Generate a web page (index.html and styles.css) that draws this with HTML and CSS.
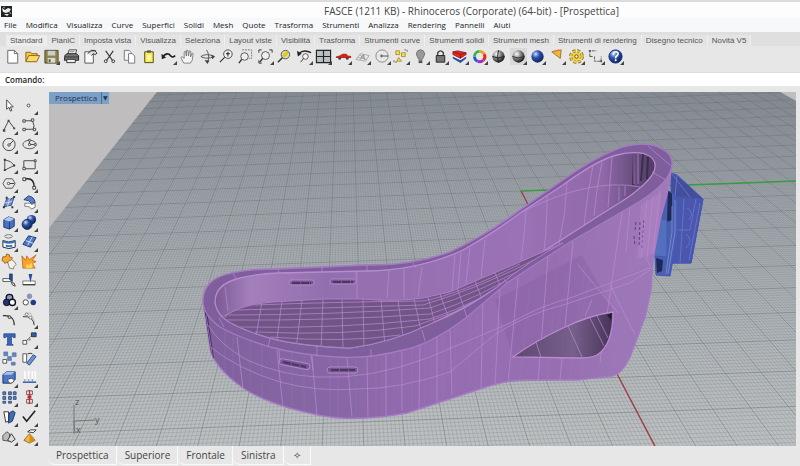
FILE: index.html
```html
<!DOCTYPE html>
<html lang="it">
<head>
<meta charset="utf-8">
<title>FASCE - Rhinoceros</title>
<link rel="stylesheet" href="styles.css">
</head>
<body>
<header class="titlebar">
  <svg class="logo" viewBox="0 0 11 11"><rect width="11" height="11" fill="#222"/><path d="M1 2l3 2 3-2 3 1-2 3-3 1-3-1zM3 8l5 0-2 2z" fill="#e8eeee"/><path d="M2 1l2 1M8 5l2 3" stroke="#9aa" /></svg>
  <h1>FASCE (1211 KB) - Rhinoceros (Corporate) (64-bit) - [Prospettica]</h1>
</header>
<nav class="menubar">
  <a href="#">File</a><a href="#">Modifica</a><a href="#">Visualizza</a><a href="#">Curve</a><a href="#">Superfici</a><a href="#">Solidi</a><a href="#">Mesh</a><a href="#">Quote</a><a href="#">Trasforma</a><a href="#">Strumenti</a><a href="#">Analizza</a><a href="#">Rendering</a><a href="#">Pannelli</a><a href="#">Aiuti</a>
</nav>
<div class="tabs">
  <button class="on">Standard</button><button>PianiC</button><button>Imposta vista</button><button>Visualizza</button><button>Seleziona</button><button>Layout viste</button><button>Visibilità</button><button>Trasforma</button><button>Strumenti curve</button><button>Strumenti solidi</button><button>Strumenti mesh</button><button>Strumenti di rendering</button><button>Disegno tecnico</button><button>Novità V5</button>
</div>
<svg class="defs" width="0" height="0"><defs>
  <radialGradient id="ball" cx=".35" cy=".3" r=".75"><stop offset="0" stop-color="#fff"/><stop offset=".45" stop-color="#888"/><stop offset="1" stop-color="#111"/></radialGradient>
  <radialGradient id="blueball" cx=".35" cy=".3" r=".75"><stop offset="0" stop-color="#cfe0ff"/><stop offset=".4" stop-color="#2f55ae"/><stop offset="1" stop-color="#0a1c55"/></radialGradient>
</defs></svg>
<div class="toolbar">
  <button aria-label="Nuovo"><svg viewBox="0 0 18 18"><path d="M4 2.500h7l3.500 3.500v10H4z" fill="#fff" stroke="#666"/><path d="M11 2.500V6h3.500" fill="none" stroke="#666"/></svg></button>
  <button aria-label="Apri"><svg viewBox="0 0 18 18"><path d="M2 14V4.500h5l1 1.500h6v2" fill="#f5c94a" stroke="#8a6414"/><path d="M2 14.500L5 8h11.500l-3 6.500z" fill="#ffd966" stroke="#8a6414"/></svg></button>
  <button class="fly" aria-label="Salva"><svg viewBox="0 0 18 18"><path d="M2 2.500h14v13.500H2z" fill="#918443" stroke="#4b4b32"/><path d="M5 3h8v5H5z" fill="#c9cfd0"/><path d="M5 10.500h8v5H5z" fill="#d9dbd5"/><path d="M6 12h2v3H6z" fill="#554"/></svg></button>
  <button aria-label="Stampa"><svg viewBox="0 0 18 18"><path d="M5 7l1.500-5h8L13 7" fill="#fff" stroke="#444"/><path d="M2 8l2-2h10l2.500 2v5h-15z" fill="#777" stroke="#222"/><path d="M2 9.500h14M4 12h9v3.500H4z" fill="#eee" stroke="#333"/><path d="M7 4h5" stroke="#777"/></svg></button>
  <button aria-label="Proprietà"><svg viewBox="0 0 18 18"><path d="M3 4h9v12H3z" fill="#fafafa" stroke="#555"/><path d="M6 6l4-3.500h3l3 3-2 1.500-2-1-2 2M9 3h6" fill="#ddd" stroke="#333"/></svg></button>
  <button aria-label="Taglia"><svg viewBox="0 0 18 18"><path d="M5 3l7 10M13 3L6 13" fill="none" stroke="#333" stroke-width="1.200"/><circle cx="5" cy="14" r="1.500" fill="none" stroke="#333"/><circle cx="13" cy="14" r="1.500" fill="none" stroke="#333"/></svg></button>
  <button aria-label="Copia"><svg viewBox="0 0 18 18"><path d="M3.500 2.500h5L11 5v8H3.500z" fill="#f5f5f5" stroke="#777"/><path d="M8 6h4l2.500 2.500V16H8z" fill="#fff" stroke="#777"/></svg></button>
  <button aria-label="Incolla"><svg viewBox="0 0 18 18"><path d="M5 4h9v11.500H5z" fill="#fbe94e" stroke="#514910"/><path d="M7.500 2.500h4v2.500h-4z" fill="#555"/><path d="M7 7h5v6H7z" fill="#fff6a0"/></svg></button>
  <button class="fly" aria-label="Annulla"><svg viewBox="0 0 18 18"><path d="M3 9q5-5 8-1 3 3 5 0" fill="none" stroke="#222" stroke-width="1.800"/><path d="M1.500 6l.5 6 4.500-2z" fill="#222"/></svg></button>
  <button aria-label="Panoramica"><svg viewBox="0 0 18 18"><path d="M5 16l-3-6 1-1 2.500 2V4l1.500-.5.8 5L8 2.500h1.500l.5 6 1-5.500 1.500.5-.3 6L14 5.500l1 .5-1 7-2 3z" fill="#f4f4f4" stroke="#666" stroke-width=".8"/></svg></button>
  <button aria-label="Ruota vista"><svg viewBox="0 0 18 18"><path d="M8 2q4 6 1 14M2 9q6-4 14 0M2 9q4 3 12 1" fill="none" stroke="#555"/><path d="M6 13l3 4 2-4M13 7l4 2-3 3" fill="#444"/></svg></button>
  <button aria-label="Zoom dinamico"><svg viewBox="0 0 18 18"><circle cx="10.500" cy="6.500" r="4.500" fill="#f5f5f5" stroke="#444"/><path d="M7 10l-5 5M10.500 4v5M8.500 6h4" stroke="#333" stroke-width="1.200"/></svg></button>
  <button aria-label="Zoom finestra"><svg viewBox="0 0 18 18"><path d="M5.500 2h10v9h-3" fill="none" stroke="#777" stroke-dasharray="2 1"/><circle cx="8" cy="9" r="4" fill="#eee" stroke="#555"/><path d="M5 12l-3 4" stroke="#333" stroke-width="1.500"/></svg></button>
  <button class="fly" aria-label="Zoom estensioni"><svg viewBox="0 0 18 18"><path d="M2 5V2h3M13 2h3v3M2 13v3h3" fill="none" stroke="#333"/><circle cx="9" cy="8" r="4.200" fill="#eee" stroke="#555"/><path d="M6 11l-3 4" stroke="#333" stroke-width="1.500"/></svg></button>
  <button aria-label="Zoom selezione"><svg viewBox="0 0 18 18"><circle cx="10" cy="7" r="4.500" fill="#d8d8b0" stroke="#555"/><path d="M7 10l-5 5" stroke="#333" stroke-width="1.500"/><path d="M7.500 9l5-4.500" stroke="#e3ca00" stroke-width="3"/></svg></button>
  <button class="fly" aria-label="Vista precedente"><svg viewBox="0 0 18 18"><path d="M3 6q5-5 13-1" fill="none" stroke="#222" stroke-width="1.500"/><path d="M1 3l1 6 4-3z" fill="#222"/><circle cx="10" cy="9" r="3" fill="#f5f5f5" stroke="#555"/><path d="M8 11l-3 4" stroke="#333"/></svg></button>
  <button class="fly" aria-label="Quattro viste"><svg viewBox="0 0 18 18"><path d="M1.500 2.500h15v13h-15z" fill="#b9c0c4" stroke="#222" stroke-width="1.200"/><path d="M9 2v14M2 9h14" stroke="#222" stroke-width="1.200"/></svg></button>
  <button class="fly" aria-label="Vista destra"><svg viewBox="0 0 18 18"><path d="M1 9l4-1 3-2h4l1.500 2 3.500.5v2H1z" fill="#d2231b"/><circle cx="5" cy="11" r="1.500" fill="#444"/><circle cx="13" cy="11" r="1.500" fill="#444"/></svg></button>
  <button class="fly" aria-label="Piano C"><svg viewBox="0 0 18 18"><path d="M2 12l5-6 9 2-4 6zM4 10l9 2M6 7l7 6M11 7l-5 6" fill="none" stroke="#aaa"/><path d="M7 11l3-4 1 5" fill="none" stroke="#888"/></svg></button>
  <button class="fly" aria-label="Snap"><svg viewBox="0 0 18 18"><circle cx="8.500" cy="8.500" r="6.500" fill="none" stroke="#888"/><path d="M8 8.500h7" stroke="#555"/><circle cx="8" cy="8.500" r="1.500" fill="#777"/></svg></button>
  <button class="fly" aria-label="Seleziona"><svg viewBox="0 0 18 18"><path d="M3 3h4v4H3zM9 5h4v4H9zM6 10l3 4H4z" fill="#fadc45" stroke="#a17f21" stroke-width=".8"/><path d="M12 2h3v3M1 13v2h3" fill="none" stroke="#666" stroke-dasharray="2 1"/></svg></button>
  <button class="fly" aria-label="Nascondi"><svg viewBox="0 0 18 18"><path d="M6 10q-3-4 0-7 3-2.500 6 0 3 3 0 7l-1 2H7z" fill="#999" stroke="#666" stroke-width=".8"/><path d="M7 13h4v3H7z" fill="#555"/></svg></button>
  <button class="fly" aria-label="Blocca"><svg viewBox="0 0 18 18"><path d="M6 8V5q3-4 6 0v3" fill="none" stroke="#444" stroke-width="1.500"/><path d="M4.500 8h9v7h-9z" fill="#777" stroke="#222"/></svg></button>
  <button class="fly" aria-label="Livelli"><svg viewBox="0 0 18 18"><path d="M2 8l8 4 6-4v3l-6 5-8-5z" fill="#2b4da0"/><path d="M2 7l8 4 6-4v2l-6 4-8-4z" fill="#fff"/><path d="M2 4l5-1 9 2v2l-6 4-8-4z" fill="#e1281e" stroke="#7b1512" stroke-width=".7"/><path d="M10 7v4M2 4l8 3 6-2" stroke="#7b1512" fill="none" stroke-width=".7"/></svg></button>
  <button class="fly" aria-label="Colori"><svg viewBox="0 0 18 18"><g fill="none" stroke-width="3"><path d="M9 3.500a5.500 5.500 0 0 1 5 3" stroke="#e9a21a"/><path d="M14 6.500a5.500 5.500 0 0 1-1 6.500" stroke="#e02a22"/><path d="M13 13a5.500 5.500 0 0 1-6 1" stroke="#a12bc0"/><path d="M7 14a5.500 5.500 0 0 1-3.300-5" stroke="#2758d2"/><path d="M3.700 9A5.500 5.500 0 0 1 9 3.500" stroke="#37b349"/></g></svg></button>
  <button aria-label="Ombreggiato"><svg viewBox="0 0 18 18"><circle cx="9" cy="9" r="6.500" fill="url(#ball)"/><path d="M9 2.500q-2 6 0 13M2.500 9q6 3 13 0" fill="none" stroke="#222"/></svg></button>
  <button class="fly" aria-label="Fantasma"><svg viewBox="0 0 18 18"><rect width="18" height="18" fill="#d9d9d9"/><circle cx="9" cy="9" r="6.500" fill="url(#ball)"/><path d="M2.500 9q6 3 13 0" fill="none" stroke="#333"/></svg></button>
  <button class="fly" aria-label="Render"><svg viewBox="0 0 18 18"><circle cx="9" cy="9" r="6.500" fill="url(#blueball)"/></svg></button>
  <button class="fly" aria-label="Luce"><svg viewBox="0 0 18 18"><path d="M4 4l10-2-1 9z" fill="#f3b73c" stroke="#8d5a1d" stroke-width=".8"/><path d="M5 4l7-2" stroke="#e8803a" stroke-width="1.500"/></svg></button>
  <button class="fly" aria-label="Opzioni"><svg viewBox="0 0 18 18"><circle cx="9" cy="9" r="6" fill="none" stroke="#7d6118" stroke-width="3.500" stroke-dasharray="3 1.700"/><circle cx="9" cy="9" r="6" fill="none" stroke="#f0cb3a" stroke-width="2" stroke-dasharray="3 1.700"/><circle cx="9" cy="9" r="4.500" fill="#f3cf3c"/><circle cx="9" cy="9" r="1.800" fill="#eee" stroke="#6d5210"/></svg></button>
  <button class="fly" aria-label="Quota"><svg viewBox="0 0 18 18"><path d="M3 9V3h7M3 9h3M8 9v5h7V9" fill="none" stroke="#555" stroke-dasharray="3 1"/><path d="M2 2h2v2H2zM14 13h2v2h-2z" fill="#555"/></svg></button>
  <button class="fly" aria-label="Guida"><svg viewBox="0 0 18 18"><circle cx="9" cy="9" r="7" fill="url(#blueball)" stroke="#183a86"/><path d="M6.500 7q0-3 2.700-3 2.800 0 2.500 2.500-.2 1.500-2.500 3v1.500" fill="none" stroke="#fff" stroke-width="1.700"/><circle cx="9.200" cy="13" r="1.100" fill="#fff"/></svg></button>
</div>
<form class="command"><label for="cmd">Comando:</label><input id="cmd" type="text"></form>
<main class="work">
<aside class="palette">
  <button aria-label="Puntatore"><svg viewBox="0 0 18 18"><path d="M6 3v10l2.500-2 1.500 4 1.500-.7L10 10.500h3z" fill="#fff" stroke="#444"/></svg></button>
  <button class="fly" aria-label="Punto"><svg viewBox="0 0 18 18"><circle cx="8" cy="9" r="1.500" fill="#fff" stroke="#444"/></svg></button>
  <button class="fly" aria-label="Polilinea"><svg viewBox="0 0 18 18"><path d="M3 14L8 4l6 8" fill="none" stroke="#444"/><path d="M2 13h2.500v2.500H2zM7 3h2v2H7zM13 11h2v2h-2z" fill="#444"/></svg></button>
  <button class="fly" aria-label="Curva"><svg viewBox="0 0 18 18"><path d="M3 4h9q3 5 1 9H4" fill="none" stroke="#444"/><g fill="#fff" stroke="#444"><path d="M2 3h2.500v2.500H2zM11 2h2.500v2.500H11zM2 12h2.500v2.500H2zM13 12h2.500v2.500H13z"/></g></svg></button>
  <button class="fly" aria-label="Cerchio"><svg viewBox="0 0 18 18"><circle cx="8.500" cy="9" r="6.500" fill="none" stroke="#444"/><path d="M8 10l5-5" stroke="#333"/><circle cx="8.500" cy="9.500" r="1.300" fill="#fff" stroke="#444"/></svg></button>
  <button class="fly" aria-label="Ellisse"><svg viewBox="0 0 18 18"><ellipse cx="9" cy="9" rx="7" ry="4.500" fill="none" stroke="#555"/><path d="M9 9h6M9 5v4" stroke="#444"/><path d="M8 3.500h2v2H8zM14 8h2v2h-2zM8 8h2v2H8z" fill="#fff" stroke="#444" stroke-width=".8"/></svg></button>
  <button class="fly" aria-label="Arco"><svg viewBox="0 0 18 18"><path d="M4 15V4q7 1 10 6L4 15" fill="none" stroke="#444"/><path d="M3 3h2v2H3zM13 9h2v2h-2zM3 14h2v2H3z" fill="#333"/></svg></button>
  <button class="fly" aria-label="Rettangolo"><svg viewBox="0 0 18 18"><path d="M3 5h12v8.500H3z" fill="none" stroke="#444"/><path d="M2 12h2.500v2.500H2zM14 4h2v2h-2z" fill="#fff" stroke="#444"/></svg></button>
  <button class="fly" aria-label="Poligono"><svg viewBox="0 0 18 18"><path d="M5 4h7l3 5-3 5H5L2 9z" fill="none" stroke="#555"/><path d="M8 9h6" stroke="#333"/><circle cx="8" cy="9" r="1.300" fill="#fff" stroke="#444"/></svg></button>
  <button class="fly" aria-label="Raccordo"><svg viewBox="0 0 18 18"><path d="M4 4h3q7 0 7 9" fill="none" stroke="#222" stroke-width="1.500"/><path d="M2 3h3v3H2zM12.500 12h3v3h-3z" fill="#fff" stroke="#333"/></svg></button>
  <button class="fly" aria-label="Superficie"><svg viewBox="0 0 18 18"><path d="M6 5q4 2 8-2l-3 9q-4 0-8 2z" fill="#6f8cc9" stroke="#274a8f"/><path d="M4 9.500q5 0 8-2M9 5L7 13" fill="none" stroke="#cfdaf2"/><path d="M5 3h2v2H5zM13 2h2v2h-2zM11 13h2v2h-2zM2 13h2v2H2z" fill="#333"/></svg></button>
  <button class="fly" aria-label="Raccordo superfici"><svg viewBox="0 0 18 18"><path d="M3 6l5-4q6 1 7 7l-4 1q-2-4-8-4z" fill="#5b7fc6" stroke="#213f7b"/><path d="M4 10q6-1 7 1l4-1v4l-4 2q-1-3-7-3z" fill="#fff" stroke="#777"/></svg></button>
  <button class="fly" aria-label="Box"><svg viewBox="0 0 18 18"><path d="M3 6l5-3 6 2v8l-5 3-6-2z" fill="#4a72c2" stroke="#1b3675"/><path d="M3 6l5-3 6 2-5 3z" fill="#b6c8ed"/><path d="M9 8v8" stroke="#1b3675"/></svg></button>
  <button class="fly" aria-label="Booleana"><svg viewBox="0 0 18 18"><circle cx="11" cy="6" r="5" fill="url(#blueball)"/><circle cx="6.500" cy="11" r="5.300" fill="url(#blueball)" stroke="#234"/></svg></button>
  <button class="fly" aria-label="Proietta"><svg viewBox="0 0 18 18"><ellipse cx="8" cy="3.500" rx="4" ry="1.800" fill="none" stroke="#777"/><path d="M2 8q6 3 13 0v7q-7 3-13 0z" fill="#fff" stroke="#222"/><path d="M2 8q6 3 13 0v2q-7 3-13 0zM5 12.500q4 1 7 0v2q-4 1-7 0z" fill="#3975c7"/></svg></button>
  <button class="fly" aria-label="Mesh"><svg viewBox="0 0 18 18"><path d="M2 12l6-9 8 2-6 10z" fill="#4e79c5" stroke="#1b3675"/><path d="M5 8l8 3M12 4L7 13" stroke="#dbe4f7"/></svg></button>
  <button aria-label="Unisci"><svg viewBox="0 0 18 18"><path d="M2 4l3 0 1-3 3 1v2l3 1-1 3 1 2-3 1-3-1-2 1-1-2-2-1z" fill="#f6a92e" stroke="#7f5013" stroke-width=".8"/><path d="M7 9l3-1 1-1 3 2 2 3-2 2-1 3-4-1-1-3z" fill="#f4f0e5" stroke="#666" stroke-width=".8"/></svg></button>
  <button aria-label="Esplodi"><svg viewBox="0 0 18 18"><path d="M1 3l4 5 1-5 3 4 7-5-4 6 4 1-4 2 3 5H2z" fill="#f9a32a" stroke="#c35e10" stroke-width=".8"/><path d="M5 16l1-5 2 2 4-3v6z" fill="#ffd451"/></svg></button>
  <button aria-label="Tronca"><svg viewBox="0 0 18 18"><path d="M2 7h9v3H2z" fill="#fff" stroke="#555"/><path d="M9 2h3v8l-3-2z" fill="#234b9f" stroke="#123" stroke-width=".6"/><path d="M11 11q4 0 4 4-4-1-4-4z" fill="#fff" stroke="#333"/></svg></button>
  <button aria-label="Dividi"><svg viewBox="0 0 18 18"><path d="M2 9.500h13v4H2z" fill="#fff" stroke="#777"/><path d="M8 2h4L10 11z" fill="#234b9f"/><path d="M2 13.500h13" stroke="#222"/></svg></button>
  <button class="fly" aria-label="Raggruppa"><svg viewBox="0 0 18 18"><circle cx="9" cy="6" r="3.500" fill="#8d99c9" stroke="#112" stroke-width="1.500"/><circle cx="6" cy="11" r="3.500" fill="#223372" stroke="#112"/><circle cx="12" cy="11" r="3.300" fill="#fff" stroke="#112" stroke-width="1.500"/></svg></button>
  <button aria-label="Separa"><svg viewBox="0 0 18 18"><circle cx="9" cy="4.500" r="2.800" fill="#8a97b9"/><circle cx="5" cy="11" r="2.800" fill="#fff" stroke="#444"/><circle cx="13" cy="11" r="2.900" fill="#233c88"/></svg></button>
  <button aria-label="Modifica punti"><svg viewBox="0 0 18 18"><path d="M2 5q12-1 12 10" fill="none" stroke="#333" stroke-width="1.300"/><circle cx="9" cy="6.500" r="1.500" fill="#ddd" stroke="#333"/></svg></button>
  <button class="fly" aria-label="Curva punti"><svg viewBox="0 0 18 18"><path d="M2 6q11-1 12 9" fill="none" stroke="#333"/><path d="M3 4L10 2l5 11" fill="none" stroke="#bbb"/><circle cx="6" cy="3.500" r="1.500" fill="#fff" stroke="#777"/><circle cx="10" cy="7" r="1.500" fill="#fff" stroke="#777"/></svg></button>
  <button aria-label="Testo"><svg viewBox="0 0 18 18"><path d="M3 3h12v4h-2l-1-1.500h-1V13l2 2H6l1-2V5.500H6L5 7H3z" fill="#3d68ba" stroke="#203f82" stroke-width=".8"/></svg></button>
  <button class="fly" aria-label="Sposta"><svg viewBox="0 0 18 18"><path d="M2 10h4v4H2z" fill="#fff" stroke="#555"/><path d="M6 10l5-5" stroke="#444" stroke-dasharray="2 1"/><path d="M11 2h5v4h-5z" fill="#315fb1" stroke="#234"/><path d="M8 8h2v2H8z" fill="#777"/></svg></button>
  <button aria-label="Copia oggetti"><svg viewBox="0 0 18 18"><path d="M3 2h4v4H3zM12 3h4v4h-4zM7 7h4v4H7zM11 13h4v3h-4z" fill="#6688c2" stroke="#466293" stroke-width=".6"/><path d="M2 10h4v4H2z" fill="#fff" stroke="#555"/></svg></button>
  <button aria-label="Ruota"><svg viewBox="0 0 18 18"><path d="M2 4h4v9H2z" fill="#fff" stroke="#555"/><path d="M13 5l3 2-7 9-3-2z" fill="#6b93cf" stroke="#2e538e"/><path d="M7 4q3-1 5 0" fill="none" stroke="#333"/></svg></button>
  <button class="fly" aria-label="Solido"><svg viewBox="0 0 18 18"><path d="M2 6l4-3h9v8l-4 4H2z" fill="#4c78c5" stroke="#1b3675"/><path d="M2 6l4-3h9l-4 3z" fill="#a9c0e8"/><path d="M7 11l4-1 3 1-1 3-3 1-2-1z" fill="#fff" stroke="#444" stroke-width=".8"/></svg></button>
  <button class="fly" aria-label="Proiezione"><svg viewBox="0 0 18 18"><path d="M4 2v9M8 2v9M12 2v9M15 2v9" stroke="#fff" stroke-width="1.500"/><path d="M3 11l1 2 1-2M7 11l1 2 1-2M11 11l1 2 1-2" fill="#777"/><path d="M2 14h14" stroke="#3c66b6" stroke-width="1.700"/></svg></button>
  <button class="fly" aria-label="Serie"><svg viewBox="0 0 18 18"><g fill="#6783b9" stroke="#223f79" stroke-width=".8"><path d="M2 3h3v3H2zM8 3h3v3H8zM13 3h3v3h-3zM2 8h3v3H2zM8 8h3v3H8zM13 8h3v3h-3zM2 13h3v2H2zM8 13h3v2H8z"/></g></svg></button>
  <button class="fly" aria-label="Allinea"><svg viewBox="0 0 18 18"><path d="M6 2h6v4H6zM6 11h6v4H6z" fill="#f4f4f4" stroke="#555"/><path d="M9 1v15" stroke="#d3272a" stroke-width="1.500"/><path d="M7 7h4v3H7z" fill="#c22"/></svg></button>
  <button class="fly" aria-label="Torsione"><svg viewBox="0 0 18 18"><path d="M3 4h5v10l-3 1z" fill="#fff" stroke="#333"/><path d="M9 5l4-2 2 2-3 9-4 2z" fill="#426bb8" stroke="#1b3675"/></svg></button>
  <button class="fly" aria-label="Verifica"><svg viewBox="0 0 18 18"><path d="M2 9l4 5 9-11" fill="none" stroke="#222" stroke-width="1.700"/></svg></button>
  <button class="fly" aria-label="Forma"><svg viewBox="0 0 18 18"><path d="M2 13V8l4-4 3 2v8z" fill="#bbb" stroke="#555"/><path d="M7 13l4-7 4 6-4 3z" fill="#ddd" stroke="#333"/></svg></button>
  <button class="fly" aria-label="Piramide"><svg viewBox="0 0 18 18"><path d="M3 13l6-7 6 7-6 3z" fill="#f2b63a" stroke="#7d5614" stroke-width=".8"/><path d="M9 6v10l6-3z" fill="#d68f1f"/><path d="M7 4l3-2h6l-3 3z" fill="#fff" stroke="#333"/></svg></button>
</aside>
<section class="view">
  <button class="viewname"><span>Prospettica</span><i>▼</i></button>
  <svg class="scene" viewBox="49 92 747 354">
    <defs>
      <linearGradient id="floor" x1="0" y1="0" x2="0" y2="1"><stop offset="0" stop-color="#979da4"/><stop offset=".3" stop-color="#a5abaf"/><stop offset="1" stop-color="#bcc0c1"/></linearGradient>
      <linearGradient id="body" gradientUnits="userSpaceOnUse" x1="203" y1="0" x2="672" y2="0"><stop offset="0" stop-color="#7f619d"/><stop offset=".3" stop-color="#8967a6"/><stop offset=".5" stop-color="#946cb0"/><stop offset=".75" stop-color="#976fb1"/><stop offset="1" stop-color="#a07bba"/></linearGradient>
      <linearGradient id="inside" gradientUnits="userSpaceOnUse" x1="215" y1="0" x2="656" y2="0"><stop offset="0" stop-color="#7b5b94"/><stop offset=".08" stop-color="#a37fbb"/><stop offset=".25" stop-color="#926fae"/><stop offset=".7" stop-color="#9a72b5"/><stop offset=".88" stop-color="#8f69a8"/><stop offset="1" stop-color="#4e3a62"/></linearGradient>
      <linearGradient id="hole" x1="0" y1="0" x2="1" y2="0"><stop offset="0" stop-color="#5d4871"/><stop offset=".6" stop-color="#77608c"/><stop offset="1" stop-color="#473356"/></linearGradient>
      <clipPath id="plane"><path d="M157 92H780L796 101V446H49V228z"/></clipPath>
      <clipPath id="sole"><path id="soleShape" d="M222 317L240 308Q255 303 273 302L323 299 363 299Q395 302 423 298L450 292 473 282 513 265 563 243Q530 260 497 287 467 307 430 324 390 343 350 348 300 346 270 338 235 328 222 317z"/></clipPath>
      <clipPath id="outer"><path d="M203 301Q207 315 220 327 240 337 270 347 300 355 337 357 385 357 403 350 430 340 467 317L507 283 565 245 637 203Q670 182 672 162L668 190 660 220 653 260 651 290 645 317 630 357Q622 374 612 376L577 380 513 380Q495 382 480 389L407 413Q357 422 323 416 270 406 243 388 212 366 210 347z"/></clipPath>
    </defs>
    <rect x="49" y="92" width="747" height="354" fill="#bfbdbe"/>
    <g clip-path="url(#plane)">
      <rect x="49" y="92" width="747" height="354" fill="url(#floor)"/>
      <path id="fine" class="fine"/>
      <path id="major" class="major"/>
    </g>
    <path d="M521 191L796 181" stroke="#3b9a44" stroke-width="1.500"/>
    <path d="M521 191L655 446" stroke="#a23a44" stroke-width="1.300"/>
    <g class="axes"><path d="M74 434V405M74 421l21-1M74 421l1 12"/><text x="75" y="405">z</text><text x="95" y="423">y</text><text x="76" y="433">x</text></g>

    <g stroke="#4656b6" stroke-width="1">
      <path d="M671 173L677 175 703 199 691 263 671 263z" fill="#434f9c"/>
      <path d="M674 197L703 199 691 263 671 263z" fill="#4a57ac"/>
      <path d="M672 174L690 197M677 175L675 197M684 199L680 263M696 199L690 230 672 230M687 208q8 4 2 12M686 234q8 6 0 14M700 203L689 260" fill="none" stroke="#6273cc"/>
      <path d="M664 192h8l6 10v30l-8 44-14-1-1-18 6-41z" fill="#4a5fae"/>
      <path d="M668 190l4 4v26l-5 2zM656 258l7 2-1 11-5 2z" fill="#1e2958" stroke="none"/>
      <path d="M659 218l8 2v37l-13-1z" fill="#5270bb"/>
      <path d="M675 200v32l-7 42M672 206v26l-6 42" fill="none" stroke="#7186d4"/>
    </g>

    <path d="M203 301Q203 286 217 278 235 269 278 269L367 265Q412 266 450 252 485 236 520 210L563 180Q597 156 623 147 643 142 655 146 673 152 672 165L668 190 660 220 653 260 651 290 645 317 630 357Q622 374 612 376L577 380 537 380Q510 378 480 389L407 413Q357 422 323 416 270 406 243 388 212 366 210 347z" fill="url(#body)" stroke="#a67ac4" stroke-width="1.500"/>
    <g clip-path="url(#outer)">
      <path d="M203 301l8 56 3 2-7-48z" fill="#3d2d50"/>
      <path d="M495 300L582 255 614 312 563 328 513 357z" fill="#7b5b9c" opacity=".28"/>
      <path d="M651 260L615 285 606 376 660 370z" fill="#9b78ba" opacity=".5"/>
      <path class="hatch" d="M225 330v60M233 334v60M250 340v60M262 344v60M292 352v70M304 354v70M330 357v70M338 357v70M356 357v70M376 356v70M382 356v70M394 354v70M412 348v70M425 342v70M443 332v70M455 325v70M470 316v70M477 312l-2 90M500 292l-8 90M520 275l-10 110M532 268l-12 110M560 250l-14 130M590 235l-22 150M625 215l-25 160M600 225l-30 150M575 240l-30 150"/>
      <path class="rib" d="M206 315l7 45M237 337l6 52M277 350l6 58M312 356l5 61M347 357l5 60M367 357l1 60M386 355v60M402 351v60M420 344l-1 65M437 337v65M450 330l2 65M483 303l-2 85M500 290l-5 95M518 278l-10 105M548 257l-10 125M573 242l-13 138M622 212l-22 150M592 300l-7 16M610 285l25 50M578 265l40 48"/>
      <path class="rib" d="M210 347Q240 370 280 382 317 392 357 389 400 389 450 372L497 333Q530 313 563 305L630 283 650 270M208 325Q220 345 247 360 280 375 317 377 370 380 430 357L510 323Q540 306 570 298L650 268"/>
      <path d="M641 205l20-12-4 60-20 6z" fill="#b184c5" opacity=".55"/>
      <path d="M636 222l-1 8M640 222l-1 24M644 220l-2 28M634 236l1 10" stroke="#5b417d" stroke-dasharray="3 2"/>
      <path class="rib" d="M647 200l-6 58M653 196l-6 62M660 190l-7 62M630 206l-4 45M646 258l6 12"/>
    </g>

    <path d="M513 357Q535 341 563 328 590 315 613 312 613 345 597 355 592 358 577 358z" fill="url(#hole)" stroke="#b98bd0" stroke-width="1.300"/>
    <path d="M536 342l5 15M568 326l14 31M590 318l14 28M597 316l11 22" class="rib"/>
    <path d="M607 315l5-2-1 7z" fill="#221a2b"/>

    <path d="M203 301Q203 286 217 278 235 269 278 269L367 265Q412 266 450 252 485 236 520 210L563 180Q597 156 623 147 643 142 655 146 673 152 672 165 670 183 637 203L565 245 507 283 467 317Q430 345 403 350 370 359 337 357 300 355 270 347 235 336 220 327 203 315 203 301z" fill="#7e5e9b" stroke="#a67ac4" stroke-width="1.300"/>
    <path d="M215 302Q215 284 240 278 255 274 278 273L367 271Q420 270 463 250 495 232 520 213L563 185Q597 160 617 155 633 151 645 154 656 158 655 167 655 178 627 198L597 217 530 260 497 287Q467 309 430 324 390 343 350 348 300 346 270 338 235 328 222 317 216 310 215 302z" fill="url(#inside)" stroke="#b98bd3" stroke-width="1.300"/>
    <path d="M634 154l-1 31M643 154l-2 27M648 157l-1 22" stroke="#30243c" stroke-width="2" opacity=".7"/>
    <path class="rib" d="M455 254l-3 37M461 252l-3 36M470 248l-4 36M485 240l-4 38M526 210Q524 240 521 260M547 196q0 30-3 55M567 182q-1 32-8 62M593 165q-6 30-9 60M602 162q-6 28-8 54M612 157q-2 24-4 50M634 154v30M389 271l-2 27M404 269v29M422 267l-4 30M357 272v26M225 287l3 24M520 213Q590 177 640 187M500 280L547 251M638 154v30M619 187v14M625 186v10"/>
    <g clip-path="url(#sole)">
      <rect x="215" y="240" width="350" height="110" fill="#725587"/>
      <path class="rib" d="M233 307l-15 20M262 302l-7 40M282 301l-6 45M302 300l-6 50M323 299l-2 52M342 298l1 52M363 298l1 50M381 299l4 48M398 300l6 44M414 299l8 36M428 297l8 30M440 294l9 25M457 288l8 22M475 281l7 18M495 273l5 12"/>
      <path class="rib" d="M235 310Q330 308 423 305 480 288 540 257M228 315Q330 315 430 308 480 292 540 260M224 320Q330 321 430 314 480 298 530 266M240 327Q340 329 430 319 480 302 520 275M255 332Q345 336 415 326L480 303M270 337Q345 343 400 335M255 305Q330 302 423 301 460 294 520 264"/>
    </g>
    <use href="#soleShape" fill="none" stroke="#ac7fc6"/>
    <path d="M233 273l3 6M278 269l1 4M322 267v5M367 265v6M413 263l3 5M224 327l-5-9M268 347l2-8M317 356v-9M371 357v-8M425 341l-3-11M467 317l-3-8M507 283l-3-4M648 146l23 20M652 172l14 8" class="rib"/>
    <g fill="#765891" stroke="#b487cc" stroke-width="1">
      <rect x="289" y="280" width="25" height="5" rx="2"/><rect x="330" y="279" width="26" height="5" rx="2"/>
      <rect x="279" y="361" width="31" height="6" rx="3" transform="rotate(11 294 364)"/><rect x="327" y="367" width="31" height="6" rx="3"/>
    </g>
    <path d="M292 283h19M333 282h20M283 362l23 5M331 370h24" stroke="#4b365f" stroke-width="2" stroke-dasharray="8 1"/>
    <path d="M279 350l1 12M311 355l2 15M356 278v-7M291 278v5" class="rib"/>
  </svg>
</section>
</main>
<footer class="viewtabs">
  <button>Prospettica</button><button>Superiore</button><button>Frontale</button><button>Sinistra</button><button class="add" aria-label="Nuova vista">✧</button>
</footer>
<script src="grid.js"></script>
</body>
</html>
```
FILE: styles.css
```css
* { box-sizing: border-box; }
body { margin: 0; background: #e7e7e7; font-family: "Open Sans", "Noto Sans", sans-serif; color: #333; }
button { border: 0; padding: 0; margin: 0; background: none; font: inherit; color: inherit; }
a { color: inherit; text-decoration: none; }
.defs { display: block; position: absolute; }
.titlebar { display: flex; align-items: center; height: 18px; padding: 2px 0 0 1px; background: #fdfdfd; border-top: 2px solid #dcdcdc; }
.logo { width: 11px; height: 11px; }
.titlebar h1 { flex: 1; margin: 0; padding-left: 131px; font-size: 10px; line-height: 14px; font-weight: 400; text-align: center; color: #444; white-space: nowrap; }
.menubar { display: flex; align-items: center; gap: 9px; height: 14px; padding-left: 4px; background: #f6f8f9; font-size: 8px; line-height: 12px; color: #222; }
.tabs { display: flex; align-items: stretch; height: 14px; padding: 3px 0 0 6px; background: #dfdfdf; font-family: "Liberation Sans", sans-serif; font-size: 8px; color: #555; }
.tabs button { padding: 0 4px; background: #e4e4e4; border-right: 1px solid #efefef; line-height: 11px; white-space: nowrap; }
.tabs .on { background: #ececec; }
.toolbar { display: grid; grid-template-columns: repeat(32, 1fr); align-items: center; max-width: 625px; height: 26px; padding: 0 0 6px 3px; }
.toolbar button, .palette button { position: relative; display: flex; align-items: center; justify-content: center; }
.toolbar svg { width: 17px; height: 17px; }
.palette svg { width: 17px; height: 17px; }
.fly::after { content: ""; position: absolute; right: 1px; bottom: 0; border: 2px solid transparent; border-right-color: #444; border-bottom-color: #444; }
.command { display: flex; align-items: center; height: 14px; margin: 0 0 6px; padding-left: 5px; background: #fff; border-top: 1px solid #ddd; font-size: 8px; font-weight: 600; color: #222; }
.command input { flex: 1; height: 12px; border: 0; padding: 0 4px; background: transparent; font: inherit; outline: 0; }
.work { display: flex; align-items: stretch; padding-right: 4px; }
.palette { flex: none; display: grid; grid-template-columns: 19px 20px; grid-auto-rows: 1fr; width: 49px; padding-top: 4px; contain: size; }
.view { flex: 1; position: relative; min-width: 0; }
.scene { display: block; width: 100%; height: auto; }
.viewname { position: absolute; top: 0; left: 0; display: flex; height: 12px; align-items: center; background: #7c9fc8; font-size: 8px; color: #24354d; }
.viewname span { padding: 0 4px 0 6px; line-height: 12px; }
.viewname i { padding: 0 1px; border-left: 1px solid #506f96; font-family: "DejaVu Sans", sans-serif; font-size: 6px; font-style: normal; line-height: 12px; }
.fine { fill: none; stroke: #6a7076; stroke-width: .6; opacity: .34; }
.major { fill: none; stroke: #646a70; stroke-width: .8; opacity: .6; }
.rib { fill: none; stroke: #b98ad2; stroke-width: 1; opacity: .7; }
.hatch { fill: none; stroke: #a87cc2; stroke-width: .8; opacity: .3; }
.axes path { fill: none; stroke: #777; }
.axes text { font-size: 9px; fill: #555; }
.viewtabs { display: flex; height: 20px; padding-left: 48px; font-size: 10px; color: #444; }
.viewtabs button { height: 19px; padding: 0 7px 0 8px; border-right: 1px solid #fafafa; border-bottom: 1px solid #fafafa; border-bottom-left-radius: 7px; }
.viewtabs .add { padding: 0 9px; }
```
FILE: grid.js
```js
// Perspective construction plane: vertical family meets at VX,VY; cells shrink towards the horizon.
const VX = 346, VY = -144, X0 = 521, Y0 = 191;
const depth = Y0 - VY, cell = 16.6 * depth / 236, step = 1.2e-4, slope = -0.036;
let fine = "", major = "";
for (let i = -400; i <= 400; i++) {
  const bottom = VX + (X0 + i * cell / 10 - VX) * (446 - VY) / depth;
  const top = VX + (X0 + i * cell / 10 - VX) * (92 - VY) / depth;
  const d = `M${top.toFixed(1)} 92L${bottom.toFixed(1)} 446`;
  if (i % 10) fine += d; else major += d;
}
for (let i = -140; i <= 200; i++) {
  const inv = 1 / depth + i * step / 10;
  if (inv <= 0.0012) continue;
  const y = VY + 1 / inv;
  const d = `M49 ${(y - slope * (X0 - 49)).toFixed(1)}L796 ${(y + slope * (796 - X0)).toFixed(1)}`;
  if (i % 10) fine += d; else major += d;
}
document.getElementById("fine").setAttribute("d", fine);
document.getElementById("major").setAttribute("d", major);
```
